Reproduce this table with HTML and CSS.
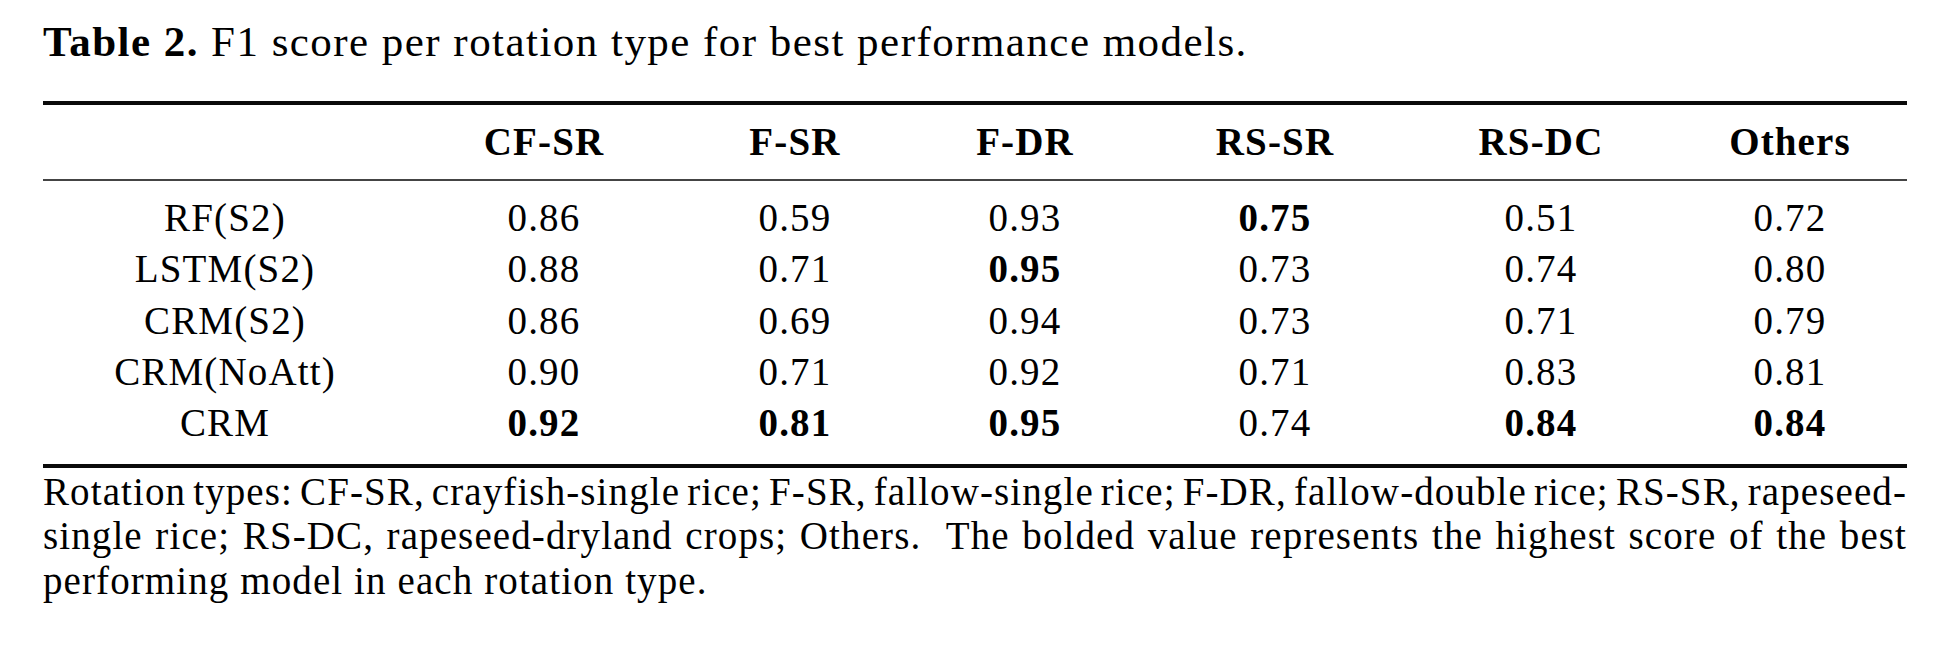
FILE: index.html
```html
<!DOCTYPE html>
<html lang="en">
<head>
<meta charset="utf-8">
<title>Table 2</title>
<link rel="stylesheet" href="styles.css">
</head>
<body>
<div class="page">
  <p class="caption"><b>Table 2.</b> F1 score per rotation type for best performance models.</p>
  <table class="results">
    <colgroup>
      <col class="c-model">
      <col class="c-cfsr">
      <col class="c-fsr">
      <col class="c-fdr">
      <col class="c-rssr">
      <col class="c-rsdc">
      <col class="c-oth">
    </colgroup>
    <thead>
      <tr>
        <th></th>
        <th>CF-SR</th>
        <th>F-SR</th>
        <th>F-DR</th>
        <th>RS-SR</th>
        <th>RS-DC</th>
        <th>Others</th>
      </tr>
    </thead>
    <tbody>
      <tr class="first">
        <td>RF(S2)</td><td>0.86</td><td>0.59</td><td>0.93</td><td class="best">0.75</td><td>0.51</td><td>0.72</td>
      </tr>
      <tr>
        <td>LSTM(S2)</td><td>0.88</td><td>0.71</td><td class="best">0.95</td><td>0.73</td><td>0.74</td><td>0.80</td>
      </tr>
      <tr>
        <td>CRM(S2)</td><td>0.86</td><td>0.69</td><td>0.94</td><td>0.73</td><td>0.71</td><td>0.79</td>
      </tr>
      <tr>
        <td>CRM(NoAtt)</td><td>0.90</td><td>0.71</td><td>0.92</td><td>0.71</td><td>0.83</td><td>0.81</td>
      </tr>
      <tr class="last">
        <td>CRM</td><td class="best">0.92</td><td class="best">0.81</td><td class="best">0.95</td><td>0.74</td><td class="best">0.84</td><td class="best">0.84</td>
      </tr>
    </tbody>
  </table>
  <div class="note">
    <span class="line just">Rotation types: CF-SR, crayfish-single rice; F-SR, fallow-single rice; F-DR, fallow-double rice; RS-SR, rapeseed-</span>
    <span class="line just">single rice; RS-DC, rapeseed-dryland crops; Others.&nbsp; The bolded value represents the highest score of the best</span>
    <span class="line">performing model in each rotation type.</span>
  </div>
</div>
</body>
</html>
```

FILE: styles.css
```css
html, body {
  margin: 0;
  padding: 0;
  background: #ffffff;
}

body {
  font-family: "Liberation Serif", "Times New Roman", serif;
  color: #000000;
}

.page {
  width: 1864px;
  padding: 16.5px 53px 0 43px;
}

.caption {
  margin: 0;
  font-size: 43px;
  line-height: 50px;
  letter-spacing: 1.46px;
  white-space: nowrap;
}

.caption b {
  font-weight: 700;
}

.results {
  margin-top: 34.5px;
  width: 1864px;
  table-layout: fixed;
  border-collapse: separate;
  border-spacing: 0;
  border-top: 4px solid #0a0a0a;
  border-bottom: 4px solid #0a0a0a;
  font-size: 39px;
  line-height: 51.25px;
  letter-spacing: 1.15px;
}

.c-model { width: 364px; }
.c-cfsr { width: 274px; }
.c-fsr { width: 228px; }
.c-fdr { width: 232px; }
.c-rssr { width: 268px; }
.c-rsdc { width: 264px; }
.c-oth { width: 234px; }

.results th,
.results td {
  padding: 0;
  text-align: center;
  white-space: nowrap;
}

.results th {
  font-weight: 700;
  padding-top: 11.2px;
  padding-bottom: 11.55px;
  border-bottom: 2px solid #444444;
}

.results td {
  font-weight: 400;
}

.results tr.first td {
  padding-top: 11.2px;
}

.results tr.last td {
  padding-bottom: 15.55px;
}

.results td.best {
  font-weight: 700;
}

.note {
  margin-top: 1.6px;
  font-size: 39px;
  line-height: 44.5px;
  letter-spacing: 1.1px;
}

.note .line {
  display: block;
  white-space: nowrap;
}

.note .line.just {
  text-align: justify;
  text-align-last: justify;
  word-spacing: -6px;
}
```
